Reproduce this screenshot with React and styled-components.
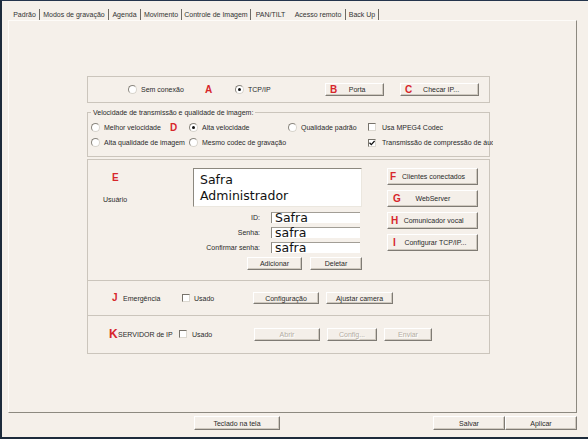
import React from 'react';
import styled, { createGlobalStyle } from 'styled-components';

const Global = createGlobalStyle`
  html, body { margin: 0; padding: 0; background: #f5f0ea; }
  body { font-family: "Liberation Sans", Arial, sans-serif; }
  * { box-sizing: border-box; }
`;

const BG = '#f5f0ea';
const ETCH = '#cbc5bc';

const Window = styled.div`
  width: 588px;
  height: 439px;
  overflow: hidden;
  background: ${BG};
  border-top: 1px solid #24344c;
  border-left: 2px solid #1d2b3c;
  border-bottom: 2px solid #1d2b3c;
  display: flex;
  flex-direction: column;
  font-family: "Liberation Sans", Arial, sans-serif;
  font-size: 7px;
  color: #2a2a2a;
`;

const TabStrip = styled.div`
  height: 19px;
  display: flex;
  align-items: flex-end;
  padding-left: 8px;
`;

const Tab = styled.div`
  width: ${p => p.$w}px;
  height: 12px;
  line-height: 12px;
  text-align: center;
  white-space: nowrap;
  color: #333;
  border-right: 1px solid ${p => (p.$bar ? '#6e6a64' : 'transparent')};
  margin-bottom: -1px;
`;

const Panel = styled.div`
  margin-left: 6px;
  width: 569px;
  height: 393px;
  border: 1px solid;
  border-color: #fdfbf8 #8d8980 #8d8980 #fdfbf8;
  padding: 55px 0 0 78px;
`;

const Block = styled.div`
  width: 403px;
  display: flex;
  flex-direction: column;
`;

const EtchBox = styled.div`
  border: 1px solid ${ETCH};
  height: ${p => p.$h}px;
  margin-top: ${p => p.$mt || 0}px;
`;

const Cells = styled.div`
  display: grid;
  grid-template-columns: ${p => p.$cols};
  align-items: center;
  height: ${p => p.$h}px;
  padding-left: ${p => p.$pl}px;
  white-space: nowrap;
`;

const Group = styled.fieldset`
  margin: 5px 0 0;
  padding: 3px 0 6px 2px;
  border: 1px solid ${ETCH};
  min-inline-size: 0;
`;

const Legend = styled.legend`
  padding: 0 2px;
  margin-left: 1px;
  line-height: 9px;
  font-size: 7px;
  color: #2a2a2a;
`;

const ClipCell = styled.div`
  overflow: hidden;
`;

const Letter = styled.span`
  color: #d7262b;
  font-weight: bold;
  font-size: ${p => p.$size || 10}px;
  line-height: 10px;
  font-family: "Liberation Sans", Arial, sans-serif;
`;

const RadioWrap = styled.label`
  display: inline-flex;
  align-items: center;
  gap: 4px;
  white-space: nowrap;
`;

const Circle = styled.span`
  width: 9px;
  height: 9px;
  border-radius: 50%;
  background: #fff;
  border: 1px solid;
  border-color: #8a867e #d8d4cc #d8d4cc #8a867e;
  display: inline-flex;
  align-items: center;
  justify-content: center;
  flex: none;
`;

const Dot = styled.span`
  width: 3px;
  height: 3px;
  border-radius: 50%;
  background: #111;
`;

const Box = styled.span`
  width: 8px;
  height: 8px;
  background: #fff;
  border: 1px solid;
  border-color: #77736b #dcd8d0 #dcd8d0 #77736b;
  display: inline-flex;
  align-items: center;
  justify-content: center;
  flex: none;
`;

const CheckWrap = styled.label`
  display: inline-flex;
  align-items: center;
  gap: ${p => (p.$gap != null ? p.$gap : 6)}px;
  white-space: nowrap;
`;

const Btn = styled.div`
  width: ${p => p.$w}px;
  height: ${p => p.$h || 13}px;
  background: #f4efe9;
  border: 1px solid;
  border-color: #ffffff #7f7b74 #7f7b74 #ffffff;
  box-shadow: inset -1px -1px 0 #cfc9bf;
  display: flex;
  align-items: center;
  padding-left: ${p => p.$pl || 0}px;
  font-size: 7px;
  white-space: nowrap;
  color: ${p => (p.$disabled ? '#b3ada3' : '#2a2a2a')};
  text-shadow: ${p => (p.$disabled ? '1px 1px 0 #fff' : 'none')};
  margin-left: ${p => p.$ml || 0}px;
`;

const BtnLabel = styled.span`
  flex: 1;
  text-align: center;
  padding-right: ${p => p.$pr || 0}px;
`;

const Sunken = styled.div`
  border-top: 1px solid ${ETCH};
  height: ${p => p.$h}px;
`;

const UserSection = styled.div`
  height: 120px;
  display: flex;
`;

const LeftCol = styled.div`
  width: 105px;
  padding-left: 15px;
  display: flex;
  flex-direction: column;
`;

const ELetter = styled.div`
  margin-top: 13px;
  padding-left: 9px;
  line-height: 10px;
`;

const UserLabel = styled.div`
  margin-top: 11px;
  line-height: 9px;
`;

const MidCol = styled.div`
  width: 169px;
  padding-top: 8px;
  display: flex;
  flex-direction: column;
`;

const ListBox = styled.div`
  height: 39px;
  background: #fff;
  border: 1px solid;
  border-color: #8c887f #ebe7df #ebe7df #8c887f;
  padding: 3px 0 0 6px;
  font-family: "DejaVu Sans", Verdana, sans-serif;
  font-size: 12.5px;
  line-height: 16px;
  color: #111;
`;

const FormGrid = styled.div`
  margin-top: 5px;
  display: grid;
  grid-template-columns: 67px 89px;
  column-gap: 11px;
  row-gap: 4px;
  align-items: center;
`;

const FieldLabel = styled.div`
  text-align: right;
  line-height: 11px;
  white-space: nowrap;
`;

const Input = styled.div`
  height: 11px;
  background: #fff;
  border-top: 1px solid #a29e96;
  border-left: 1px solid #8e8a82;
  padding-left: 3px;
  font-family: "DejaVu Sans", Verdana, sans-serif;
  font-size: 12.5px;
  line-height: 10px;
  color: #111;
  white-space: nowrap;
`;

const BtnRow = styled.div`
  margin-top: 4px;
  display: flex;
`;

const RightCol = styled.div`
  width: 91px;
  margin-left: 25px;
  padding-top: 8px;
  display: flex;
  flex-direction: column;
  gap: 5px;
`;

const Footer = styled.div`
  height: 24px;
  display: flex;
  align-items: flex-start;
  padding: 3px 11px 0 192px;
`;

const Spacer = styled.div`
  flex: 1;
`;

function Radio({ label, checked }) {
  return (
    <RadioWrap>
      <Circle>{checked && <Dot />}</Circle>
      <span>{label}</span>
    </RadioWrap>
  );
}

function Check({ label, checked, gap }) {
  return (
    <CheckWrap $gap={gap}>
      <Box>
        {checked && (
          <svg width="6" height="6" viewBox="0 0 6 6">
            <path d="M0.5 2.8 L2.3 4.6 L5.6 1" stroke="#111" strokeWidth="1.3" fill="none" />
          </svg>
        )}
      </Box>
      <span>{label}</span>
    </CheckWrap>
  );
}

const tabs = [
  ['Padrão', 30, true],
  ['Modos de gravação', 69, true],
  ['Agenda', 32, true],
  ['Movimento', 41, true],
  ['Controle de Imagem', 69, true],
  ['PAN/TILT', 40, false],
  ['Acesso remoto', 55, true],
  ['Back Up', 33, true],
];

export default function App() {
  return (
    <>
      <Global />
      <Window>
        <TabStrip>
          {tabs.map(([t, w, bar]) => (
            <Tab key={t} $w={w} $bar={bar}>{t}</Tab>
          ))}
        </TabStrip>
        <Panel>
          <Block>
            <EtchBox $h={27}>
              <Cells $cols="77px 30px 90px 75px 79px" $h={25} $pl={40}>
                <Radio label="Sem conexão" />
                <Letter>A</Letter>
                <Radio label="TCP/IP" checked />
                <Btn $w={59} $pl={4}>
                  <Letter>B</Letter>
                  <BtnLabel $pr={6}>Porta</BtnLabel>
                </Btn>
                <Btn $w={79} $pl={4}>
                  <Letter>C</Letter>
                  <BtnLabel $pr={8}>Checar IP...</BtnLabel>
                </Btn>
              </Cells>
            </EtchBox>

            <Group>
              <Legend>Velocidade de transmissão e qualidade de imagem:</Legend>
              <Cells $cols="79px 19px 99px 80px 125px" $h={15} $pl={1}>
                <Radio label="Melhor velocidade" />
                <Letter>D</Letter>
                <Radio label="Alta velocidade" checked />
                <Radio label="Qualidade padrão" />
                <ClipCell><Check label="Usa MPEG4 Codec" /></ClipCell>
              </Cells>
              <Cells $cols="79px 19px 99px 80px 125px" $h={15} $pl={1}>
                <Radio label="Alta qualidade de imagem" />
                <span />
                <Radio label="Mesmo codec de gravação" />
                <span />
                <ClipCell><Check label="Transmissão de compressão de áudio" checked /></ClipCell>
              </Cells>
            </Group>

            <EtchBox $h={195} $mt={2}>
              <UserSection>
                <LeftCol>
                  <ELetter><Letter>E</Letter></ELetter>
                  <UserLabel>Usuário</UserLabel>
                </LeftCol>
                <MidCol>
                  <ListBox>
                    <div>Safra</div>
                    <div>Administrador</div>
                  </ListBox>
                  <FormGrid>
                    <FieldLabel>ID:</FieldLabel>
                    <Input>Safra</Input>
                    <FieldLabel>Senha:</FieldLabel>
                    <Input>safra</Input>
                    <FieldLabel>Confirmar senha:</FieldLabel>
                    <Input>safra</Input>
                  </FormGrid>
                  <BtnRow>
                    <Btn $w={55} $ml={54}><BtnLabel>Adicionar</BtnLabel></Btn>
                    <Btn $w={52} $ml={8}><BtnLabel>Deletar</BtnLabel></Btn>
                  </BtnRow>
                </MidCol>
                <RightCol>
                  <Btn $w={91} $h={17} $pl={2}>
                    <Letter>F</Letter>
                    <BtnLabel $pr={6}>Clientes conectados</BtnLabel>
                  </Btn>
                  <Btn $w={91} $h={17} $pl={5}>
                    <Letter>G</Letter>
                    <BtnLabel $pr={12}>WebServer</BtnLabel>
                  </Btn>
                  <Btn $w={91} $h={17} $pl={3}>
                    <Letter>H</Letter>
                    <BtnLabel $pr={8}>Comunicador vocal</BtnLabel>
                  </Btn>
                  <Btn $w={91} $h={17} $pl={5}>
                    <Letter>I</Letter>
                    <BtnLabel $pr={2}>Configurar TCP/IP...</BtnLabel>
                  </Btn>
                </RightCol>
              </UserSection>
              <Sunken $h={35}>
                <Cells $cols="11px 59px 71px 66px 7px 67px" $h={34} $pl={24}>
                  <Letter>J</Letter>
                  <span>Emergência</span>
                  <Check label="Usado" gap={4} />
                  <Btn $w={66} $h={12}><BtnLabel>Configuração</BtnLabel></Btn>
                  <span />
                  <Btn $w={67} $h={12}><BtnLabel>Ajustar camera</BtnLabel></Btn>
                </Cells>
              </Sunken>
              <Sunken $h={38}>
                <Cells $cols="9px 61px 75px 66px 7px 50px 7px 48px" $h={36} $pl={21}>
                  <Letter $size={12}>K</Letter>
                  <span>SERVIDOR de IP</span>
                  <Check label="Usado" gap={5} />
                  <Btn $w={66} $disabled><BtnLabel>Abrir</BtnLabel></Btn>
                  <span />
                  <Btn $w={50} $disabled><BtnLabel>Config...</BtnLabel></Btn>
                  <span />
                  <Btn $w={48} $disabled><BtnLabel>Enviar</BtnLabel></Btn>
                </Cells>
              </Sunken>
            </EtchBox>
          </Block>
        </Panel>
        <Footer>
          <Btn $w={86} $h={14}><BtnLabel>Teclado na tela</BtnLabel></Btn>
          <Spacer />
          <Btn $w={72} $h={14}><BtnLabel>Salvar</BtnLabel></Btn>
          <Btn $w={72} $h={14}><BtnLabel>Aplicar</BtnLabel></Btn>
        </Footer>
      </Window>
    </>
  );
}
